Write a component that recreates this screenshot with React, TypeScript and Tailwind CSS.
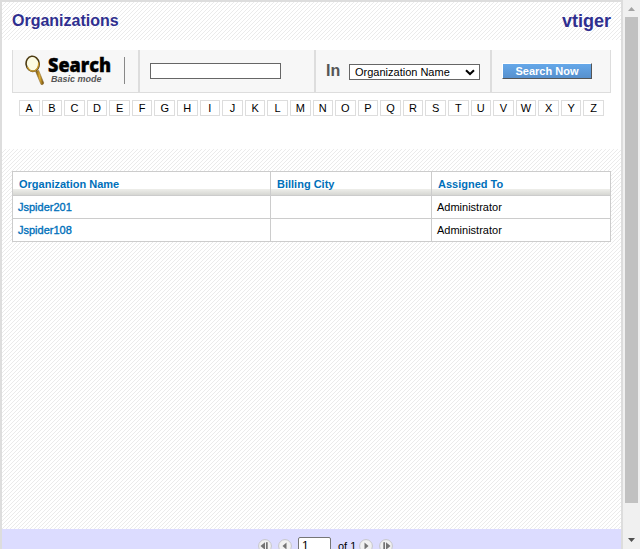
const hatch =
  "bg-[linear-gradient(135deg,transparent_43.75%,#ebebeb_43.75%,#ebebeb_56.25%,transparent_56.25%)] bg-[size:4px_4px]";

function Magnifier() {
  return (
    <svg className="h-[31px] w-5 shrink-0" viewBox="0 0 20 31">
      <defs>
        <linearGradient id="handle" x1="0" x2="1">
          <stop offset="0" stopColor="#6b4a08" />
          <stop offset=".5" stopColor="#e0ae35" />
          <stop offset="1" stopColor="#65450a" />
        </linearGradient>
      </defs>
      <path d="M10.6 16.5 L13.6 15.2 L18.8 28 Q18 30.6 16 29.4 Z" fill="url(#handle)" stroke="#80602a" strokeWidth=".5" />
      <ellipse cx="7.6" cy="8.8" rx="6.5" ry="7.6" fill="#fcfbe2" stroke="#4d3b12" strokeWidth="1.6" transform="rotate(-8 7.6 8.8)" />
      <path d="M2.5 12 Q5 17.5 10 15.6 Q14 13.5 13.6 7.5" fill="none" stroke="#c99a2e" strokeWidth="1.3" />
    </svg>
  );
}

function PageButton({ dir, bar }: { dir: "left" | "right"; bar?: boolean }) {
  return (
    <svg className="h-[14px] w-[14px] shrink-0" viewBox="0 0 14 14">
      <circle cx="7" cy="7" r="6.4" fill="#f1f1f1" stroke="#c6c6ca" strokeWidth="1" />
      <g fill="#747474" transform={dir === "right" ? "translate(14 0) scale(-1 1)" : undefined}>
        <path d={bar ? "M2.5 7 L7 3.2 V10.8 Z" : "M4.5 7 L8.5 3.5 V10.5 Z"} />
        {bar && <rect x="8" y="3.2" width="1.7" height="7.6" />}
      </g>
    </svg>
  );
}

const columns = ["Organization Name", "Billing City", "Assigned To"];
const rows = [
  ["Jspider201", "", "Administrator"],
  ["Jspider108", "", "Administrator"],
];
const grid = "grid grid-cols-[258px_161px_179px]";

export default function App() {
  return (
    <div className="flex h-[549px] w-[640px] overflow-hidden bg-white font-['Liberation_Sans',Arial,sans-serif] text-[11px] text-black">
      <main className="flex w-[623px] flex-col border-x-2 border-t-2 border-[#dddddd]">
        <header className={`flex h-[38px] shrink-0 items-center justify-between px-[10px] font-bold text-[#2f2f8f] ${hatch}`}>
          <h1 className="text-[16px] leading-none">Organizations</h1>
          <span className="text-[18px] leading-none">vtiger</span>
        </header>

        <section className="h-[109px] shrink-0 pl-[10px] pt-[10px]">
          <div className="flex h-[43px] w-[599px] border-x border-b border-[#dddddd] bg-[#f7f7f7]">
            <div className="flex w-[127px] border-r-2 border-[#dddddd] pl-3 pt-[5px]">
              <Magnifier />
              <div className="ml-[3px] w-[65px] pt-[1px]">
                <div className="h-[17px] whitespace-nowrap">
                  <svg className="h-[22px] w-[66px] overflow-visible">
                    <text x="0" y="15.5" textLength="63" lengthAdjust="spacingAndGlyphs" className="fill-black stroke-black stroke-[0.4px] font-['Open_Sans',sans-serif] text-[18.5px] font-extrabold">Search</text>
                  </svg>
                </div>
                <div className="whitespace-nowrap pl-[3px] text-[9px] font-bold italic leading-[12px] text-[#555]">Basic mode</div>
              </div>
              <div className="mt-[2px] ml-[11px] h-[27px] w-px bg-[#888]" />
            </div>
            <div className="flex w-[176px] border-r-2 border-[#dddddd] pl-[10px] pt-[13px]">
              <input aria-label="Search text" className="h-4 w-[131px] border border-[#666] bg-white" />
            </div>
            <div className="flex w-[176px] border-r-2 border-[#dddddd] pl-[10px] pt-[12px]">
              <span className="w-[23px] text-[16px] font-bold leading-[18px] text-[#555]">In</span>
              <div className="mt-[2px] flex h-4 w-[131px] items-center justify-between border border-[#666] bg-white pl-[5px] pr-[4px] leading-[14px]">
                <span className="text-[11px]">Organization Name</span>
                <svg className="h-[7px] w-[10px]" viewBox="0 0 10 7">
                  <path d="M1 1.2 L5 5 L9 1.2" fill="none" stroke="#000" strokeWidth="2" />
                </svg>
              </div>
            </div>
            <div className="pl-[10px] pt-[13px]">
              <button className="block h-4 w-[90px] border border-b-[#555] border-l-white border-r-[#555] border-t-white bg-linear-to-b from-[#65a8ea] to-[#5790cd] text-[11px] font-bold leading-[14px] text-white">Search Now</button>
            </div>
          </div>
          <div className="ml-[7px] mt-[7px] grid h-4 w-[585px] grid-cols-[repeat(26,minmax(0,1fr))] gap-[2px]">
            {"ABCDEFGHIJKLMNOPQRSTUVWXYZ".split("").map((l) => (
              <div key={l} className="border border-[#dddddd] text-center leading-[14px]">{l}</div>
            ))}
          </div>
        </section>

        <section className={`h-[380px] shrink-0 px-[10px] pt-[22px] ${hatch}`}>
          <div className="w-[599px] border-l border-t border-[#cccccc] bg-white">
            <div className={`${grid} h-6 bg-[linear-gradient(#fff_17px,#eeeeea_17px,#d2d3cf)] font-bold leading-[22px] text-[#0070ba]`}>
              {columns.map((c) => (
                <div key={c} className="border-b border-r border-[#cccccc] pl-[6px] pt-px">{c}</div>
              ))}
            </div>
            {rows.map((r) => (
              <div key={r[0]} className={`${grid} h-[23px] leading-[22px]`}>
                {r.map((c, i) => (
                  <div key={i} className={`border-b border-r border-[#cccccc] pl-[5px] ${i === 0 ? "text-[#0070ba] [-webkit-text-stroke:0.35px_#0070ba]" : ""}`}>{c}</div>
                ))}
              </div>
            ))}
          </div>
        </section>

        <footer className="flex h-[34px] shrink-0 items-center bg-[#dcdcff] pl-[256px]">
          <PageButton dir="left" bar />
          <span className="w-[6px]" />
          <PageButton dir="left" />
          <input aria-label="Page" defaultValue="1" className="ml-[6px] h-[19px] w-[33px] rounded-[2px] border border-[#767676] bg-white px-[3px] text-[12px]" />
          <span className="ml-[7px] w-[21px] whitespace-nowrap text-[11px]">of 1</span>
          <PageButton dir="right" />
          <span className="w-[6px]" />
          <PageButton dir="right" bar />
        </footer>
      </main>

      <aside className="flex w-[17px] flex-col items-center bg-[#f0f0f0]">
        <svg className="h-[17px] w-[17px] shrink-0" viewBox="0 0 17 17"><path d="M5 11 L8.5 7 L12 11 Z" fill="#a3a3a3" /></svg>
        <div className="h-[486px] w-[13px] shrink-0 bg-[#c1c1c1]" />
        <svg className="mt-[29px] h-[17px] w-[17px] shrink-0" viewBox="0 0 17 17"><path d="M5 6 H12 L8.5 10 Z" fill="#505050" /></svg>
      </aside>
    </div>
  );
}
